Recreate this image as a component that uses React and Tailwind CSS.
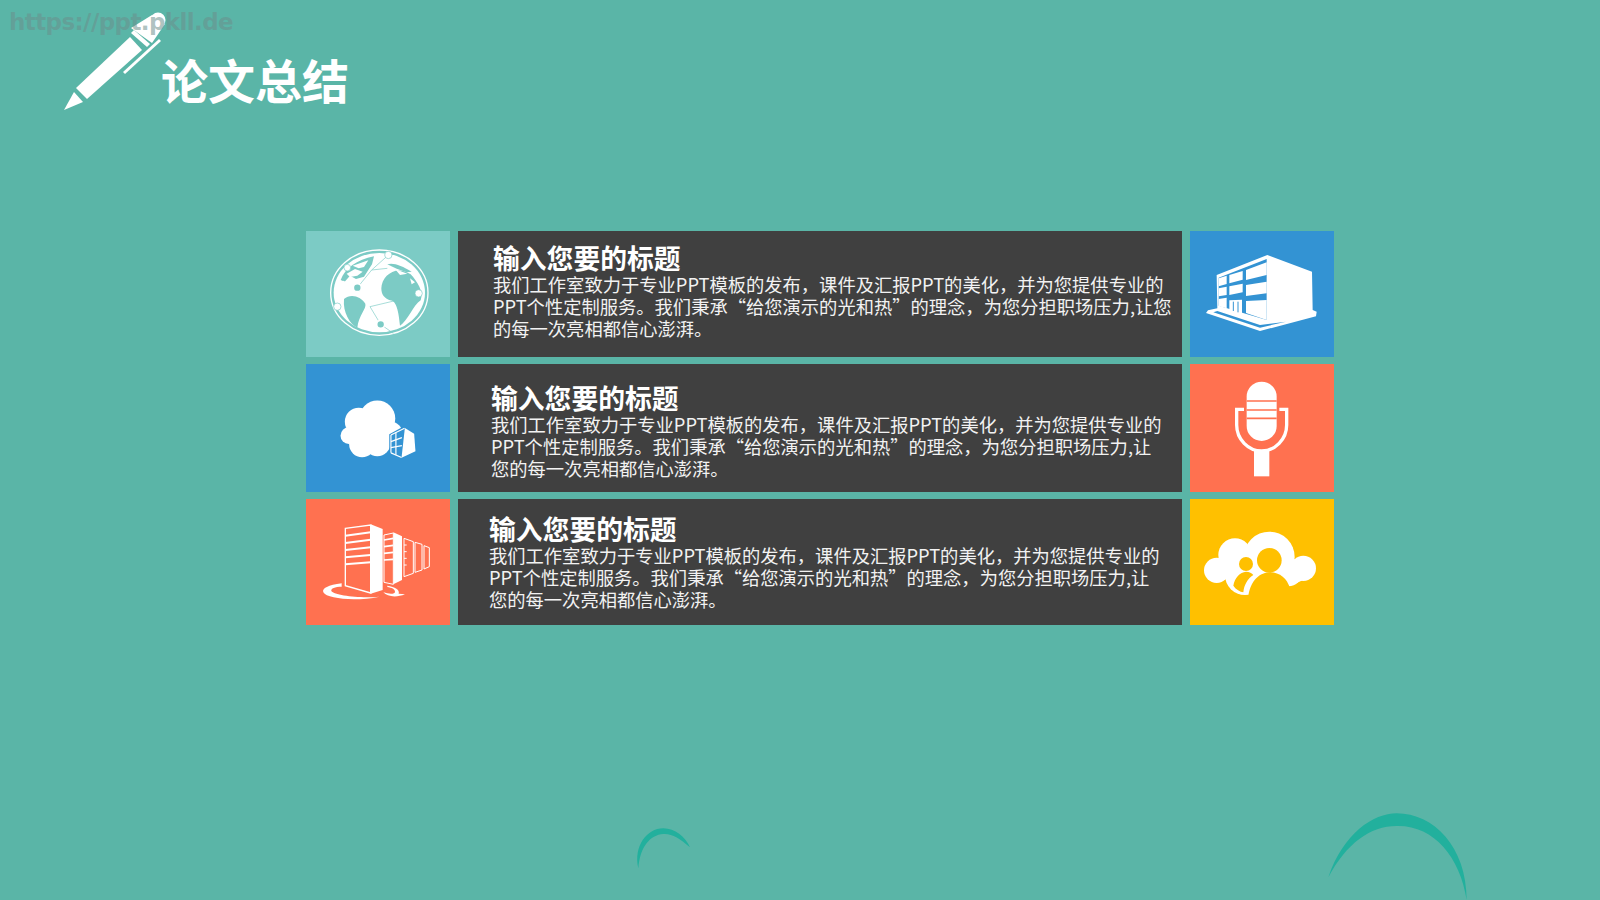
const ROWS = [
  {
    pad: "pl-[35px] pt-[12px]",
    lines: [
      "我们工作室致力于专业PPT模板的发布，课件及汇报PPT的美化，并为您提供专业的",
      "PPT个性定制服务。我们秉承“给您演示的光和热”的理念，为您分担职场压力,让您",
      "的每一次亮相都信心澎湃。",
    ],
  },
  {
    pad: "pl-[33px] pt-[19px]",
    lines: [
      "我们工作室致力于专业PPT模板的发布，课件及汇报PPT的美化，并为您提供专业的",
      "PPT个性定制服务。我们秉承“给您演示的光和热”的理念，为您分担职场压力,让",
      "您的每一次亮相都信心澎湃。",
    ],
  },
  {
    pad: "pl-[31px] pt-[15px]",
    lines: [
      "我们工作室致力于专业PPT模板的发布，课件及汇报PPT的美化，并为您提供专业的",
      "PPT个性定制服务。我们秉承“给您演示的光和热”的理念，为您分担职场压力,让",
      "您的每一次亮相都信心澎湃。",
    ],
  },
];

function Pen() {
  return (
    <svg viewBox="64 12 104 99" className="w-[104px] h-[99px] shrink-0">
      <g fill="#fff">
        <polygon points="64,110 74,92 83,102" />
        <polygon points="76,88 130,37 142,50 87,99" />
        <polygon points="131,33 134,30 150,44 147,47" />
        <polygon points="131,28 152,15 165,24 152,43" />
        <circle cx="158" cy="20" r="7.5" />
        <polygon points="123,72 159,39 161,41 125,74" />
      </g>
    </svg>
  );
}

function Globe() {
  const teal = "#7ccbc5";
  return (
    <svg viewBox="18 18 432 378" className="w-full h-full">
      <ellipse cx="238" cy="203" rx="146" ry="128" fill="none" stroke="#fff" strokeWidth="4" />
      <ellipse cx="238" cy="203" rx="137" ry="119" fill="#fff" />
      <g fill={teal}>
        <path d="M132 222 C150 205 182 212 196 236 C200 252 176 270 172 308 C150 298 128 262 132 222Z" />
        <path d="M244 190 C245 150 290 118 332 148 C352 170 372 200 362 226 C340 240 322 290 300 302 C296 262 290 226 270 226 C254 220 244 210 244 190Z" />
        <path d="M122 165 C135 130 170 104 222 94 L216 118 L192 155 L168 162 L150 152 L134 170Z" />
        <path d="M262 118 C280 112 305 122 335 140 L320 142 C300 136 280 128 262 118Z" />
      </g>
      <g fill="#fff">
        <path d="M158 122 L205 106 L192 126 L176 130Z" />
        <path d="M140 146 L165 132 L188 140 L172 152 L150 156Z" />
        <path d="M285 132 L322 146 L300 150Z" />
        <path d="M330 160 L345 172 L335 178Z" />
        <circle cx="130" cy="172" r="5" />
      </g>
      <g fill="none" stroke={teal} strokeWidth="2">
        <path d="M172 188 L215 135 L262 130" />
        <path d="M210 245 L290 226" />
        <path d="M210 245 L242 298 L280 325" />
        <path d="M215 135 L265 90" />
      </g>
      <g fill="#fff" stroke={teal} strokeWidth="2">
        <circle cx="265" cy="90" r="11" />
        <circle cx="142" cy="128" r="10" />
        <circle cx="356" cy="205" r="11" />
        <circle cx="112" cy="245" r="11" />
      </g>
      <g fill={teal} stroke="#fff" strokeWidth="5">
        <circle cx="172" cy="188" r="12" />
        <circle cx="242" cy="298" r="12" />
      </g>
    </svg>
  );
}

function CloudBuilding() {
  const blue = "#3393d3";
  return (
    <svg viewBox="18 12 432 386" className="w-full h-full">
      <g fill="#fff">
        <circle cx="232" cy="176" r="54" />
        <circle cx="176" cy="186" r="42" />
        <circle cx="146" cy="228" r="25" />
        <circle cx="186" cy="254" r="39" />
        <circle cx="232" cy="250" r="40" />
        <circle cx="272" cy="222" r="36" />
      </g>
      <polygon points="312,200 346,220 350,278 305,300 268,282 268,224" fill={blue} />
      <polygon points="315,205 343,222 347,275 305,295" fill="#fff" />
      <g fill="none" stroke="#fff" strokeWidth="3.5">
        <path d="M273 226 L314 206" />
        <path d="M273 246 L306 234" />
        <path d="M273 264 L306 258" />
        <path d="M273 280 L305 294" />
        <path d="M273 226 V280" />
        <path d="M288 218 L288 286" />
      </g>
    </svg>
  );
}

function Servers() {
  const orange = "#ff7150";
  return (
    <svg viewBox="18 12 432 378" className="w-full h-full">
      <g fill="none" stroke="#fff" strokeWidth="3">
        <polygon points="312,130 340,140 340,235 312,245" />
        <polygon points="345,142 366,148 366,225 345,232" />
        <polygon points="372,152 388,158 388,215 372,222" />
      </g>
      <path d="M312 150 H320 M312 170 H320 M312 190 H320 M312 210 H320" stroke="#fff" strokeWidth="3" />
      <polygon points="280,112 306,124 306,255 280,268" fill="#fff" />
      <polygon points="252,120 280,114 280,268 252,262" fill={orange} stroke="#fff" strokeWidth="3" />
      <g stroke="#fff" strokeWidth="5">
        <path d="M252 135 L280 130 M252 155 L280 151 M252 175 L280 172 M252 195 L280 193" />
      </g>
      <polygon points="212,88 248,102 248,285 212,296" fill="#fff" />
      <polygon points="136,100 212,90 212,294 136,272" fill={orange} stroke="#fff" strokeWidth="4" />
      <g stroke="#fff" strokeWidth="6">
        <path d="M136 122 L212 112 M136 144 L212 134 M136 165 L212 157 M136 187 L212 180 M136 208 L212 202" />
      </g>
      <g fill="#fff">
        <path d="M125 265 C85 270 65 280 70 292 C80 312 170 320 238 305 C180 310 104 302 94 288 C92 280 105 275 125 275Z" />
        <path d="M262 272 C285 275 300 285 296 296 L315 298 C290 308 262 306 250 292 C268 298 285 298 285 290 C285 282 275 278 262 276Z" />
      </g>
    </svg>
  );
}

function Building() {
  const blue = "#3393d3";
  return (
    <svg viewBox="30 18 432 378" className="w-full h-full">
      <polygon
        points="110,150 262,90 396,140 398,255 410,260 408,274 240,318 78,264 84,256 112,250"
        fill="#fff"
      />
      <g fill={blue}>
        <polygon points="116,158 260,102 260,285 116,242" />
        <polygon points="100,262 240,308 318,290 240,300 112,258" />
      </g>
      <g fill="#fff">
        <polygon points="116,160 140,152 140,177 116,184" />
        <polygon points="148,150 188,138 188,164 148,175" />
        <polygon points="198,135 260,112 260,150 198,165" />
        <polygon points="116,190 140,185 140,210 116,214" />
        <polygon points="148,184 188,176 188,202 148,210" />
        <polygon points="198,180 260,170 260,205 198,213" />
        <polygon points="116,222 140,218 140,250 116,244" />
        <polygon points="198,228 260,225 260,285 198,264" />
        <polygon points="148,226 186,224 186,268 148,256" />
      </g>
      <path d="M160 230 L160 258 M174 230 L174 262" stroke={blue} strokeWidth="3" />
    </svg>
  );
}

function Mic() {
  const orange = "#ff7150";
  return (
    <svg viewBox="30 12 432 378" className="w-full h-full">
      <rect x="200" y="62" width="90" height="178" rx="45" fill="#fff" />
      <path d="M200 120 H290 M200 147 H290 M200 172 H290" stroke={orange} strokeWidth="5" />
      <path
        d="M192 145 H170 V192 C170 235 205 270 245 270 C285 270 320 235 320 192 V145 H298"
        fill="none"
        stroke="#fff"
        strokeWidth="10"
      />
      <rect x="222" y="268" width="46" height="78" fill="#fff" />
    </svg>
  );
}

function CloudPeople() {
  const yellow = "#ffc000";
  return (
    <svg viewBox="30 12 432 378" className="w-full h-full">
      <g fill="#fff">
        <circle cx="268" cy="186" r="76" />
        <circle cx="165" cy="180" r="50" />
        <circle cx="110" cy="226" r="38" />
        <circle cx="370" cy="220" r="38" />
        <circle cx="195" cy="240" r="60" />
        <circle cx="325" cy="232" r="42" />
        <circle cx="345" cy="228" r="35" />
      </g>
      <circle cx="268" cy="196" r="37" fill={yellow} />
      <path d="M204 320 C204 265 235 232 270 232 C300 232 322 252 330 280 L340 320Z" fill={yellow} />
      <circle cx="198" cy="207" r="21" fill={yellow} />
      <path d="M160 272 C164 248 180 232 198 230 C208 230 216 234 220 240 C202 252 192 270 190 292 C180 290 168 284 160 272Z" fill={yellow} />
      <rect x="30" y="300" width="432" height="30" fill={yellow} />
    </svg>
  );
}

function Tile({ bg, children }) {
  return <div className={`${bg} overflow-hidden`}>{children}</div>;
}

function Panel({ row }) {
  return (
    <div className={`bg-[#404040] ${row.pad} whitespace-nowrap text-[#f2f2f2]`}>
      <div className="text-[26.8px] leading-[30px] font-bold text-white">输入您要的标题</div>
      <div className="text-[18.3px] leading-[22px]">
        {row.lines.map((l) => (
          <div key={l}>{l}</div>
        ))}
      </div>
    </div>
  );
}

export default function App() {
  return (
    <div
      lang="zh-CN"
      className="relative w-[1600px] h-[900px] overflow-hidden bg-[#5ab5a7] font-['Noto_Sans_CJK_SC','Noto_Sans',sans-serif]"
    >
      <header className="relative flex h-[231px] pl-[64px] pt-[12px]">
        <Pen />
        <h1 className="-ml-[7px] mt-[27px] h-[80px] text-[47px] leading-[80px] font-bold text-white">论文总结</h1>
      </header>

      {/* watermark sits on top of the pen */}
      <div className="absolute z-10 left-[9px] top-[5px] font-['DejaVu_Sans',sans-serif] font-bold text-[23px] tracking-[-0.6px] text-[#6b8f8c]/55 whitespace-nowrap">
        https://ppt.pkll.de
      </div>

      <div className="grid grid-cols-[144px_724px_144px] grid-rows-[126px_128px_126px] gap-x-[8px] gap-y-[7px] ml-[306px] w-fit">
        <Tile bg="bg-[#7ccbc5]">
          <Globe />
        </Tile>
        <Panel row={ROWS[0]} />
        <Tile bg="bg-[#3393d3]">
          <Building />
        </Tile>
        <Tile bg="bg-[#3393d3]">
          <CloudBuilding />
        </Tile>
        <Panel row={ROWS[1]} />
        <Tile bg="bg-[#ff7150]">
          <Mic />
        </Tile>
        <Tile bg="bg-[#ff7150]">
          <Servers />
        </Tile>
        <Panel row={ROWS[2]} />
        <Tile bg="bg-[#ffc000]">
          <CloudPeople />
        </Tile>
      </div>

      <svg viewBox="0 0 360 330" className="absolute left-[600px] top-[790px] w-[120px] h-[110px]">
        <path d="M115 235 C100 170 140 115 190 115 C225 115 255 140 270 172 C240 145 215 130 190 132 C150 135 120 170 115 235Z" fill="#22b09d" />
      </svg>
      <svg viewBox="0 0 600 330" className="absolute left-[1300px] top-[790px] w-[200px] h-[110px]">
        <path d="M85 262 C130 130 220 70 290 70 C400 70 500 170 500 330 C480 200 400 105 290 108 C210 108 140 160 85 262Z" fill="#22b09d" />
      </svg>
    </div>
  );
}
